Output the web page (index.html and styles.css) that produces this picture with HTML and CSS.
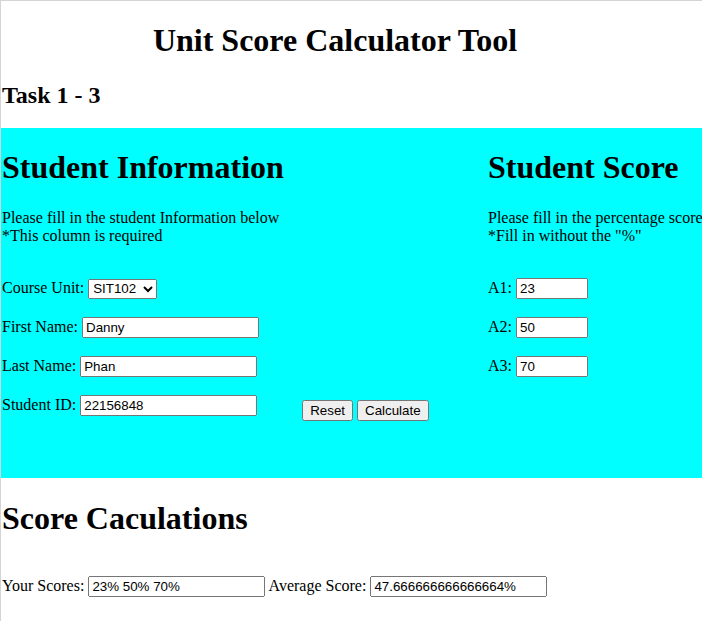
FILE: index.html
```html
<!DOCTYPE html>
<html>
<head>
<meta charset="utf-8">
<title>Unit Score Calculator Tool</title>
<link rel="stylesheet" href="styles.css">
</head>
<body>
<div class="page">
  <h1 class="title">Unit Score Calculator Tool</h1>
  <h2 class="task">Task 1 - 3</h2>
  <div class="info">
    <div class="col col-left">
      <h1 class="heading">Student Information</h1>
      <p class="note">Please fill in the student Information below<br>*This column is required</p>
      <div class="blank"></div>
      <p class="row">Course Unit: <select class="unit"><option>SIT102</option><option>SIT103</option></select></p>
      <p class="row">First Name: <input class="field" type="text" value="Danny"></p>
      <p class="row">Last Name: <input class="field" type="text" value="Phan"></p>
      <div class="row row-id">
        <span>Student ID: <input class="field" type="text" value="22156848"></span>
        <span class="buttons"><button class="btn" type="button">Reset</button> <button class="btn" type="button">Calculate</button></span>
      </div>
    </div>
    <div class="col col-right">
      <h1 class="heading">Student Score</h1>
      <p class="note">Please fill in the percentage score<br>*Fill in without the "%"</p>
      <div class="blank"></div>
      <p class="row">A1: <input class="score" type="text" value="23"></p>
      <p class="row">A2: <input class="score" type="text" value="50"></p>
      <p class="row">A3: <input class="score" type="text" value="70"></p>
    </div>
  </div>
  <h1 class="heading result-heading">Score Caculations</h1>
  <div class="blank-small"></div>
  <p class="row result-row">Your Scores: <input class="field" type="text" value="23% 50% 70%"> Average Score: <input class="field" type="text" value="47.666666666666664%"></p>
</div>
</body>
</html>
```

FILE: styles.css
```css
html, body {
  margin: 0;
  padding: 0;
  overflow: hidden;
}

body {
  font-family: "Liberation Serif", "Times New Roman", serif;
  font-size: 16px;
  color: #000;
  background: #fff;
}

.page {
  min-height: 100vh;
  box-sizing: border-box;
  border-top: 1px solid #d4d4d4;
  border-left: 1px solid #d4d4d4;
  padding-top: 0.1px;
}

.title {
  font-size: 32px;
  font-weight: bold;
  margin: 21px 0 20px 0;
  padding-right: 33px;
  text-align: center;
}

.task {
  font-size: 24px;
  font-weight: bold;
  margin: 23px 0 19px 1px;
}

.info {
  display: flex;
  background: #00ffff;
  padding-left: 1px;
  padding-bottom: 41px;
}

.col-left {
  width: 486px;
  flex: none;
}

.col-right {
  white-space: nowrap;
  flex: none;
}

.heading {
  font-size: 32px;
  font-weight: bold;
  margin: 21px 0 23px 0;
}

.result-heading {
  margin: 22px 0 23px 1px;
}

.note {
  margin: 0;
}

.blank {
  height: 31px;
}

.blank-small {
  height: 14px;
}

.row {
  margin: 0 0 16px 0;
  line-height: 23px;
}

.row-id {
  display: flex;
  align-items: flex-start;
}

.buttons {
  margin-left: 45px;
  padding-top: 5px;
}

.result-row {
  margin-left: 1px;
}

.field,
.score,
.unit,
.btn {
  font-family: "Liberation Sans", Arial, sans-serif;
  font-size: 13.33px;
}

.field {
  box-sizing: border-box;
  width: 177px;
  height: 21px;
}

.score {
  box-sizing: border-box;
  width: 72px;
  height: 21px;
}

.unit {
  box-sizing: border-box;
  width: 69px;
  height: 20px;
}

.btn {
  box-sizing: border-box;
  height: 21px;
}
```
